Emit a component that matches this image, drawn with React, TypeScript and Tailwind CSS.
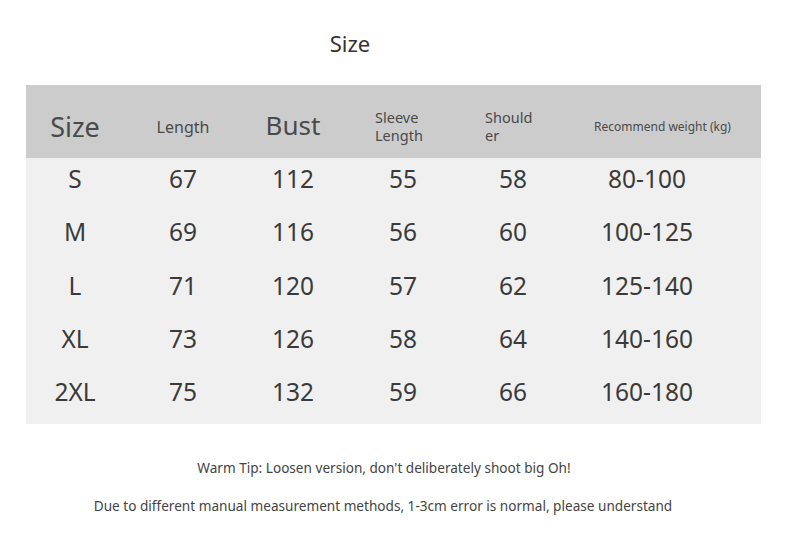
import React from "react";

const rows = [
  ["S", "67", "112", "55", "58", "80-100"],
  ["M", "69", "116", "56", "60", "100-125"],
  ["L", "71", "120", "57", "62", "125-140"],
  ["XL", "73", "126", "58", "64", "140-160"],
  ["2XL", "75", "132", "59", "66", "160-180"],
];

const cols = "grid grid-cols-[98px_118px_102px_118px_102px_1fr]";

export default function App() {
  return (
    <div
      className="w-[790px] h-[553px] bg-white text-[#333]"
      style={{ fontFamily: '"Noto Sans", "Open Sans", sans-serif' }}
    >
      <div className="h-[85px] flex items-start justify-center pt-[28px] pr-[90px]">
        <span className="text-[22px] leading-[30px] text-[#333]">Size</span>
      </div>
      <div className="ml-[26px] w-[735px]">
        <div className={`${cols} h-[73px] bg-[#cccccc] items-center text-[#4a4a4a]`}>
          <div className="text-center text-[27px] pt-[12px]">Size</div>
          <div className="text-center text-[16px] pt-[10px]">Length</div>
          <div className="text-center text-[26px] pt-[8px]">Bust</div>
          <div className="pl-[31px] text-[14.5px] leading-[18px] pt-[9px]">
            Sleeve
            <br />
            Length
          </div>
          <div className="pl-[23px] text-[14.5px] leading-[18px] pt-[9px]">
            Should
            <br />
            er
          </div>
          <div className="text-center text-[12px] pt-[10px]">Recommend weight (kg)</div>
        </div>
        <div className="bg-[#f0f0f0] h-[266px]">
          {rows.map((r) => (
            <div key={r[0]} className={`${cols} h-[53.25px] items-start text-[24.5px] leading-[42px] text-[#3a3a3a]`}>
              {r.map((c, i) => (
                <div key={i} className={i === 5 ? "text-center pr-[31px]" : "text-center"}>
                  {c}
                </div>
              ))}
            </div>
          ))}
        </div>
      </div>
      <div className="flex flex-col items-center text-[13.6px] text-[#444] mt-[34px] gap-[18px] pr-[24px]">
        <div className="leading-[20px] pl-[2px]">Warm Tip: Loosen version, don't deliberately shoot big Oh!</div>
        <div className="leading-[20px]">
          Due to different manual measurement methods, 1-3cm error is normal, please understand
        </div>
      </div>
    </div>
  );
}
